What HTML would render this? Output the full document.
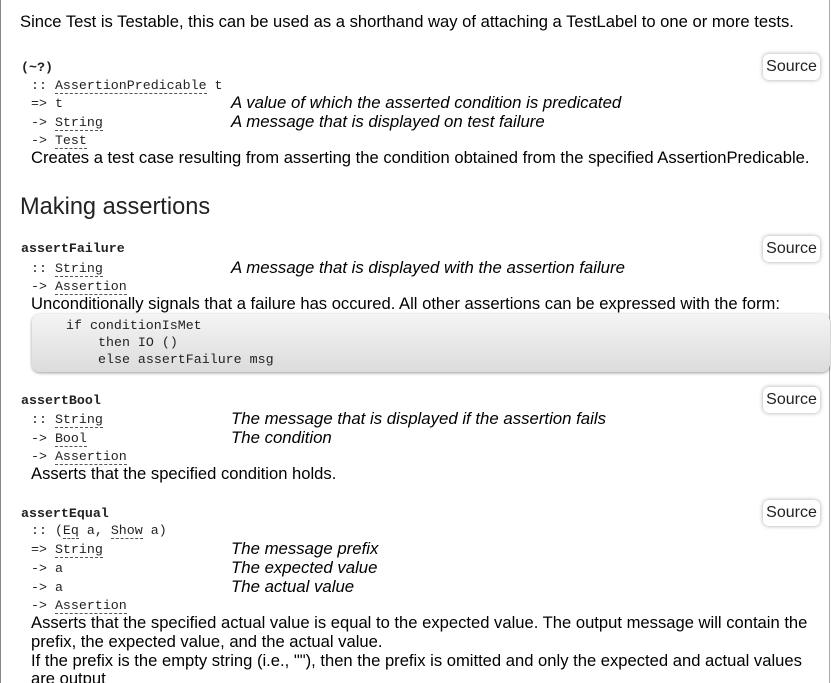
<!DOCTYPE html>
<html><head><meta charset="utf-8"><style>
html,body{margin:0;padding:0;background:#fff;width:831px;height:683px;overflow:hidden;position:relative}
body{font-family:"Liberation Sans",sans-serif;color:#000}
.l{position:absolute;white-space:nowrap;line-height:18px;height:18px}
.t{font-size:16.6px}
.m{font-family:"Liberation Mono",monospace;font-size:13.3px;color:#222}
.b{font-weight:bold;color:#222}
.i{font-style:italic;font-size:16.8px}
.u{border-bottom:1px dashed #555;line-height:14px;display:inline-block}
.src{position:absolute;left:763px;width:57px;height:26px;background:#fff;border-radius:6px;box-shadow:0 0 4px rgba(0,0,0,.35);font-size:16px;line-height:26px;text-align:center;color:#222}
.pre{position:absolute;left:32px;top:314px;width:798px;height:58px;background:linear-gradient(#f4f4f4,#dcdcdc);border-radius:8px;box-shadow:0 1px 3px rgba(0,0,0,.4)}
</style></head><body>
<div style="position:absolute;left:0;top:0;width:1px;height:683px;background:#888"></div>
<div style="position:absolute;left:829px;top:0;width:1px;height:683px;background:#aaa"></div>
<div class="l t" style="left:20px;top:13px">Since Test is Testable, this can be used as a shorthand way of attaching a TestLabel to one or more tests.</div>

<div class="l m b" style="left:21px;top:59px">(~?)</div>
<div class="src" style="top:54px">Source</div>
<div class="l m" style="left:31px;top:77px">:: <span class="u">AssertionPredicable</span> t</div>
<div class="l m" style="left:31px;top:95px">=&gt; t</div>
<div class="l i" style="left:231px;top:94px">A value of which the asserted condition is predicated</div>
<div class="l m" style="left:31px;top:114px">-&gt; <span class="u">String</span></div>
<div class="l i" style="left:231px;top:113px">A message that is displayed on test failure</div>
<div class="l m" style="left:31px;top:132px">-&gt; <span class="u">Test</span></div>
<div class="l t" style="left:31px;top:149px">Creates a test case resulting from asserting the condition obtained from the specified AssertionPredicable.</div>

<div class="l" style="left:20px;top:193px;font-size:23.6px;line-height:28px;height:28px;color:#222">Making assertions</div>

<div class="l m b" style="left:21px;top:240px">assertFailure</div>
<div class="src" style="top:236px">Source</div>
<div class="l m" style="left:31px;top:260px">:: <span class="u">String</span></div>
<div class="l i" style="left:231px;top:259px">A message that is displayed with the assertion failure</div>
<div class="l m" style="left:31px;top:278px">-&gt; <span class="u">Assertion</span></div>
<div class="l t" style="left:31px;top:295px">Unconditionally signals that a failure has occured. All other assertions can be expressed with the form:</div>
<div class="pre"></div>
<div class="l m" style="left:66px;top:317px;line-height:17px">if conditionIsMet</div>
<div class="l m" style="left:98px;top:334px;line-height:17px">then IO ()</div>
<div class="l m" style="left:98px;top:351px;line-height:17px">else assertFailure msg</div>

<div class="l m b" style="left:21px;top:392px">assertBool</div>
<div class="src" style="top:387px">Source</div>
<div class="l m" style="left:31px;top:411px">:: <span class="u">String</span></div>
<div class="l i" style="left:231px;top:410px">The message that is displayed if the assertion fails</div>
<div class="l m" style="left:31px;top:430px">-&gt; <span class="u">Bool</span></div>
<div class="l i" style="left:231px;top:429px">The condition</div>
<div class="l m" style="left:31px;top:448px">-&gt; <span class="u">Assertion</span></div>
<div class="l t" style="left:31px;top:465px">Asserts that the specified condition holds.</div>

<div class="l m b" style="left:21px;top:505px">assertEqual</div>
<div class="src" style="top:500px">Source</div>
<div class="l m" style="left:31px;top:522px">:: (<span class="u">Eq</span> a, <span class="u">Show</span> a)</div>
<div class="l m" style="left:31px;top:541px">=&gt; <span class="u">String</span></div>
<div class="l i" style="left:231px;top:540px">The message prefix</div>
<div class="l m" style="left:31px;top:560px">-&gt; a</div>
<div class="l i" style="left:231px;top:559px">The expected value</div>
<div class="l m" style="left:31px;top:579px">-&gt; a</div>
<div class="l i" style="left:231px;top:578px">The actual value</div>
<div class="l m" style="left:31px;top:597px">-&gt; <span class="u">Assertion</span></div>
<div class="l t" style="left:31px;top:614px">Asserts that the specified actual value is equal to the expected value. The output message will contain the</div>
<div class="l t" style="left:31px;top:633px">prefix, the expected value, and the actual value.</div>
<div class="l t" style="left:31px;top:652px">If the prefix is the empty string (i.e., ""), then the prefix is omitted and only the expected and actual values</div>
<div class="l t" style="left:31px;top:670px">are output</div>
</body></html>
